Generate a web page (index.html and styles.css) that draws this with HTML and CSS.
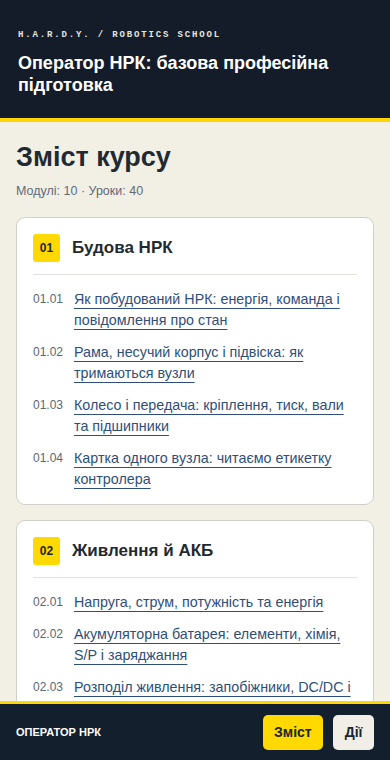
FILE: index.html
```html
<!DOCTYPE html>
<html lang="uk">
<head>
  <meta charset="UTF-8" />
  <meta name="viewport" content="width=device-width, initial-scale=1.0"/>
  <title>Оператор НРК: базова професійна підготовка</title>
  <link rel="stylesheet" href="styles.css">
</head>
<body>

  <header class="top">
    <div class="brand">H.A.R.D.Y. / ROBOTICS SCHOOL</div>
    <h1>Оператор НРК: базова професійна підготовка</h1>
  </header>

  <main class="content">
    <h2>Зміст курсу</h2>
    <p class="meta">Модулі: 10 · Уроки: 40</p>

    <!-- Module 01 -->
    <section class="module">
      <div class="module-head">
        <span class="badge">01</span>
        <h3>Будова НРК</h3>
      </div>
      <ul class="lessons">
        <li><span class="num">01.01</span><a href="#">Як побудований НРК: енергія, команда і повідомлення про стан</a></li>
        <li><span class="num">01.02</span><a href="#">Рама, несучий корпус і підвіска: як тримаються вузли</a></li>
        <li><span class="num">01.03</span><a href="#">Колесо і передача: кріплення, тиск, вали та підшипники</a></li>
        <li><span class="num">01.04</span><a href="#">Картка одного вузла: читаємо етикетку контролера</a></li>
      </ul>
    </section>

    <!-- Module 02 -->
    <section class="module">
      <div class="module-head">
        <span class="badge">02</span>
        <h3>Живлення й АКБ</h3>
      </div>
      <ul class="lessons">
        <li><span class="num">02.01</span><a href="#">Напруга, струм, потужність та енергія</a></li>
        <li><span class="num">02.02</span><a href="#">Акумуляторна батарея: елементи, хімія, S/P і заряджання</a></li>
        <li><span class="num">02.03</span><a href="#">Розподіл живлення: запобіжники, DC/DC і силова проводка</a></li>
        <li><span class="num">02.04</span><a href="#">Безпечне зберігання та транспортування АКБ</a></li>
      </ul>
    </section>
  </main>

  <nav class="bottom-bar">
    <span class="bar-title">ОПЕРАТОР НРК</span>
    <div class="bar-actions">
      <button class="btn btn-yellow">Зміст</button>
      <button class="btn btn-light">Дії</button>
    </div>
  </nav>

</body>
</html>
```

FILE: styles.css
```css
body {
  margin: 0;
  font-family: "Liberation Sans", Arial, sans-serif;
  background-color: #f2efe5;
  color: #1f2a33;
}
.top {
  background-color: #141c2a;
  color: #fff;
  padding: 30px 18px 22px;
  border-bottom: 4px solid #ffd600;
}
.brand {
  font-family: "Liberation Mono", "Courier New", monospace;
  font-weight: bold;
  font-size: 9px;
  letter-spacing: 1.85px;
  color: #e6e6e0;
}
h1 {
  margin: 12px 0 0;
  font-size: 18px;
  line-height: 22px;
  font-weight: bold;
}
.content {
  padding: 19px 16px 80px;
}
h2 {
  margin: 0;
  font-size: 27px;
  line-height: 32px;
  font-weight: bold;
}
.meta {
  margin: 11px 0 19px;
  font-size: 12.5px;
  color: #5d6b7a;
}
.module {
  background-color: #fff;
  border: 1px solid #cfd0c8;
  border-radius: 9px;
  padding: 16px 16px 14px;
  margin-bottom: 15px;
}
.module-head {
  display: flex;
  align-items: center;
  gap: 12px;
  padding-bottom: 12px;
  border-bottom: 1px solid #e2e3df;
}
.badge {
  display: flex;
  align-items: center;
  justify-content: center;
  width: 27px;
  height: 28px;
  border-radius: 3px;
  background-color: #ffd900;
  font-size: 12px;
  font-weight: bold;
  color: #1c2530;
}
h3 {
  margin: 0;
  font-size: 17px;
  font-weight: bold;
}
.lessons {
  list-style: none;
  margin: 0;
  padding: 14px 0 0;
}
.lessons li {
  display: flex;
  margin-bottom: 11px;
  line-height: 21px;
}
.lessons li:last-child {
  margin-bottom: 0;
}
.num {
  flex: 0 0 41px;
  font-size: 12px;
  color: #5d6673;
}
.lessons a {
  font-size: 14.3px;
  color: #2e4f7c;
  text-decoration: underline;
  text-decoration-thickness: 1px;
  text-underline-offset: 4px;
}
.bottom-bar {
  position: fixed;
  left: 0;
  right: 0;
  bottom: 0;
  height: 56px;
  display: flex;
  align-items: center;
  justify-content: space-between;
  padding: 0 16px;
  background-color: #141f2d;
  border-top: 3px solid #ffd600;
}
.bar-title {
  font-size: 11px;
  font-weight: bold;
  color: #fff;
}
.bar-actions {
  display: flex;
  gap: 10px;
}
.btn {
  height: 35px;
  padding: 0 11.5px;
  border: none;
  border-radius: 5px;
  font-family: inherit;
  font-size: 14px;
  font-weight: bold;
  color: #1c2530;
  cursor: pointer;
}
.btn-yellow {
  background-color: #ffd900;
}
.btn-light {
  background-color: #f0eee6;
}
```
